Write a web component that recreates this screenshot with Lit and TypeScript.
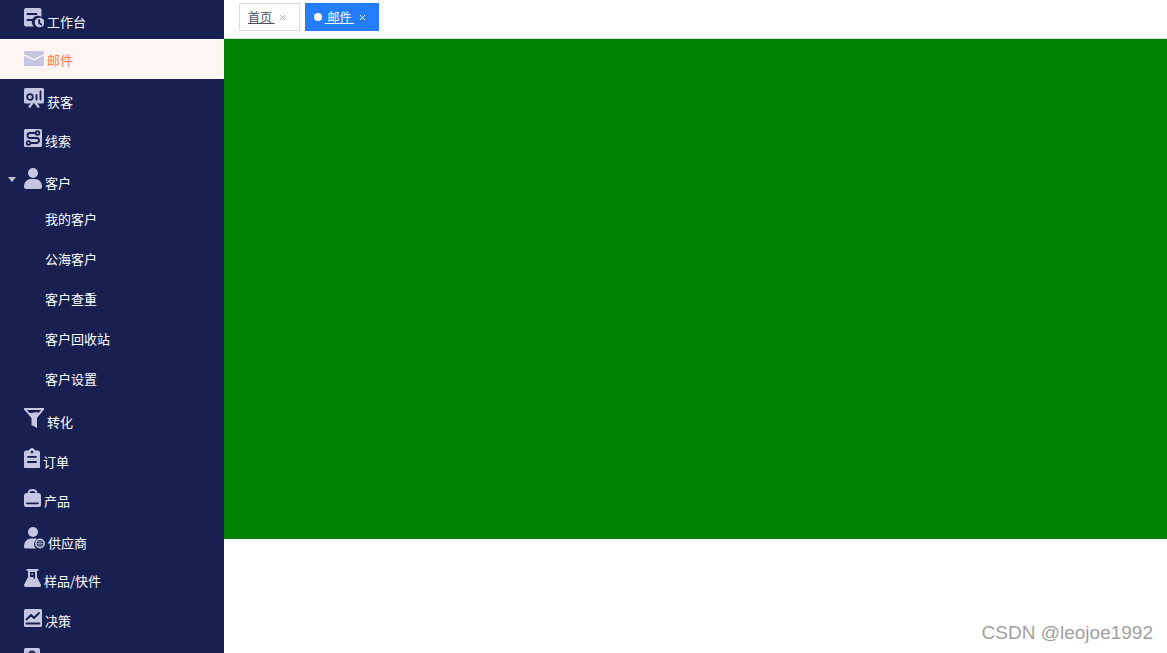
import { LitElement, html, css, svg, nothing } from "lit";
import { customElement, state } from "lit/decorators.js";
import { classMap } from "lit/directives/class-map.js";

interface Icon {
  w: number;
  h: number;
  body: unknown;
}

interface MenuItem {
  key: string;
  label?: string;
  icon: Icon;
  children?: string[];
}

const ICONS: Record<string, Icon> = {
  workbench: {
    w: 20,
    h: 20,
    body: svg`<path fill="currentColor" d="M2 0h13.500a2 2 0 0 1 2 2v7a5.800 5.800 0 0 0-7.500 9.500H2a2 2 0 0 1-2-2V2a2 2 0 0 1 2-2z"/>
      <path class="cut" d="M3.500 6h9M3.500 12h4.500"/>
      <circle cx="15.500" cy="14.500" r="4.800" fill="currentColor"/>
      <path class="cut" d="M15.200 12v3l2 1.500"/>`,
  },
  mail: {
    w: 20,
    h: 15,
    body: svg`<path fill="currentColor" d="M1 0h18a1 1 0 0 1 1 1v2l-10 5L0 3V1a1 1 0 0 1 1-1z"/>
      <path fill="currentColor" d="M0 4.600l10 5 10-5V14a1 1 0 0 1-1 1H1a1 1 0 0 1-1-1z"/>`,
  },
  acquire: {
    w: 20,
    h: 20,
    body: svg`<rect width="20" height="15.500" rx="1.500" fill="currentColor"/>
      <circle class="cut" cx="6" cy="9" r="2.800"/>
      <path class="cut" d="M12.500 7v4.500M16.500 3.500v8"/>
      <path d="M8.500 15l-3.500 4.500M11.500 15l3.500 4.500" fill="none" stroke="currentColor" stroke-width="2.200"/>`,
  },
  clue: {
    w: 18,
    h: 18,
    body: svg`<rect width="18" height="18" rx="1.500" fill="currentColor"/>
      <circle class="cut" cx="13.500" cy="4" r="1.800"/>
      <circle class="cut" cx="4.500" cy="14" r="1.800"/>
      <path class="cut" d="M11.500 4H6a2.500 2.500 0 0 0 0 5h6.500a2.500 2.500 0 0 1 0 5H6.500"/>`,
  },
  customer: {
    w: 18,
    h: 21,
    body: svg`<circle cx="9" cy="5" r="5" fill="currentColor"/>
      <path fill="currentColor" d="M0 19c0-5 3-8 7-8h4c4 0 7 3 7 8a2 2 0 0 1-2 2H2a2 2 0 0 1-2-2z"/>`,
  },
  funnel: {
    w: 20,
    h: 20,
    body: svg`<path fill="currentColor" d="M0 0h20v1.500L13 10v10l-5.500-3v-7L0 1.500z"/>
      <path fill="var(--menu)" d="M3 2h14l-1.500 2c-2 1.200-3.500 0-5.500.4-2 .5-3.500.8-5 .2z"/>`,
  },
  order: {
    w: 16,
    h: 20,
    body: svg`<path fill="currentColor" d="M1.500 2.500H4.500l1.500-1.500a3 3 0 0 1 4 0l1.500 1.500h3L16 4V19a1 1 0 0 1-1 1H1a1 1 0 0 1-1-1V4z"/>
      <circle cx="8" cy="4" r="1.300" fill="var(--menu)"/>
      <path class="cut" d="M4 8.800h8M4 14h8"/>`,
  },
  product: {
    w: 17,
    h: 18,
    body: svg`<path d="M4.500 4.500C4.500 2 6 1 8.500 1s4 1 4 3.500" fill="none" stroke="currentColor" stroke-width="1.800"/>
      <path fill="currentColor" d="M3 4h11a3 3 0 0 1 3 3v9a2 2 0 0 1-2 2H2a2 2 0 0 1-2-2V7a3 3 0 0 1 3-3z"/>
      <path class="cut" d="M3 14.300h11"/>`,
  },
  supplier: {
    w: 21,
    h: 22,
    body: svg`<circle cx="9" cy="5" r="5" fill="currentColor"/>
      <path fill="currentColor" d="M0 20c0-5 3-8.500 7-8.500h4q1.500 0 2.500.6a5.600 5.600 0 0 0-1.500 9.400H1.500A1.500 1.500 0 0 1 0 20z"/>
      <circle cx="16" cy="16.500" r="4.900" fill="currentColor"/>
      <circle cx="16" cy="16.500" r="3" fill="none" stroke="var(--menu)" stroke-width=".8"/>
      <path d="M13 15.500h6M13 17.700h6M15 13.500v6M17 13.500v6" stroke="var(--menu)" stroke-width=".6"/>`,
  },
  sample: {
    w: 17,
    h: 18,
    body: svg`<path fill="currentColor" d="M2.500 0h12v1.800H13V8l3.800 7.500A1.700 1.700 0 0 1 15.300 18H1.700A1.700 1.700 0 0 1 .2 15.500L4 8V1.800H2.500z"/>
      <path fill="var(--menu)" d="M6 3h5v6.500L9.500 10V8H6z"/>
      <path fill="currentColor" d="M7.500 4.500h1.500v1.500H7.500z"/>`,
  },
  decision: {
    w: 18,
    h: 18,
    body: svg`<rect width="18" height="18" rx="1.500" fill="currentColor"/>
      <path class="cut" d="M2.500 10.500L7 6l3 3 5-5M2.500 14.500h13"/>`,
  },
  search: {
    w: 16,
    h: 20,
    body: svg`<rect width="16" height="20" rx="1.500" fill="currentColor"/>
      <circle class="cut" cx="8" cy="7" r="3.500"/>`,
  },
};

const MENU: MenuItem[] = [
  { key: "workbench", label: "工作台", icon: ICONS.workbench },
  { key: "mail", label: "邮件", icon: ICONS.mail },
  { key: "acquire", label: "获客", icon: ICONS.acquire },
  { key: "clue", label: "线索", icon: ICONS.clue },
  {
    key: "customer",
    label: "客户",
    icon: ICONS.customer,
    children: ["我的客户", "公海客户", "客户查重", "客户回收站", "客户设置"],
  },
  { key: "convert", label: "转化", icon: ICONS.funnel },
  { key: "order", label: "订单", icon: ICONS.order },
  { key: "product", label: "产品", icon: ICONS.product },
  { key: "supplier", label: "供应商", icon: ICONS.supplier },
  { key: "sample", label: "样品/快件", icon: ICONS.sample },
  { key: "decision", label: "决策", icon: ICONS.decision },
  { key: "search", icon: ICONS.search },
];

@customElement("side-menu")
export class SideMenu extends LitElement {
  @state() private active = "mail";
  @state() private open = true;

  static styles = css`
    :host {
      --menu: #182052;
      display: block;
      background: var(--menu);
      color: #fff;
      overflow: hidden;
    }
    .list {
      margin: 0;
      padding: 0;
      list-style: none;
    }
    .root {
      margin-top: -1px;
    }
    .row {
      display: flex;
      align-items: center;
      box-sizing: border-box;
      width: 100%;
      height: 40px;
      padding: 0;
      border: 0;
      background: none;
      color: inherit;
      font: inherit;
      text-align: left;
      cursor: pointer;
    }
    .active {
      background: #fff5f2;
      color: #ff7b4f;
    }
    .arrow {
      display: flex;
      justify-content: center;
      width: 24px;
      color: #c0c4cc;
    }
    .content {
      display: block;
      line-height: 17px;
      white-space: nowrap;
    }
    .icon {
      margin: 0 3px -1px 0;
      vertical-align: baseline;
      color: #c5c6e1;
    }
    .cut {
      fill: none;
      stroke: var(--menu);
      stroke-width: 1.8;
      stroke-linecap: round;
      stroke-linejoin: round;
    }
    .child {
      padding: 0 0 2px 45px;
    }
  `;

  private pick(item: MenuItem) {
    if (item.children) this.open = !this.open;
    else this.active = item.key;
  }

  render() {
    return html`<ul class="list root">
      ${MENU.map(
        (item) => html`<li>
          <button
            class=${classMap({ row: true, active: item.key === this.active })}
            aria-label=${item.label ?? item.key}
            @click=${() => this.pick(item)}
          >
            <span class="arrow">
              ${item.children
                ? html`<svg width="8" height="5" viewBox="0 0 8 5">
                    <path d="M0 0h8L4 5z" fill="currentColor" />
                  </svg>`
                : nothing}
            </span>
            <span class="content"
              ><svg
                class="icon"
                width=${item.icon.w}
                height=${item.icon.h}
                viewBox="0 0 ${item.icon.w} ${item.icon.h}"
                aria-hidden="true"
              >
                ${item.icon.body}</svg
              >${item.label ?? nothing}</span
            >
          </button>
          ${item.children && this.open
            ? html`<ul class="list">
                ${item.children.map(
                  (c) => html`<li>
                    <button
                      class=${classMap({ row: true, child: true, active: c === this.active })}
                      @click=${() => (this.active = c)}
                    >
                      ${c}
                    </button>
                  </li>`
                )}
              </ul>`
            : nothing}
        </li>`
      )}
    </ul>`;
  }
}

@customElement("tab-bar")
export class TabBar extends LitElement {
  static styles = css`
    :host {
      display: flex;
      align-items: flex-start;
      gap: 5px;
      box-sizing: border-box;
      height: 39px;
      padding: 3px 15px 0;
      border-bottom: 1px solid #d8dce5;
      background: #fff;
      font-size: 12px;
      line-height: 18px;
    }
    .tab {
      display: flex;
      align-items: center;
      box-sizing: border-box;
      height: 28px;
      padding: 0 8px;
      border: 1px solid #d8dce5;
      color: #495060;
    }
    .current {
      border-color: #247cff;
      background: #247cff;
      color: #fff;
    }
    .dot {
      width: 8px;
      height: 8px;
      margin-right: 3px;
      border-radius: 50%;
      background: #fff;
    }
    .link {
      color: inherit;
      white-space: pre;
      text-decoration: underline;
      text-underline-offset: 1px;
    }
    .close {
      display: flex;
      align-items: center;
      justify-content: center;
      width: 16px;
      height: 16px;
      padding: 0;
      border: 0;
      background: none;
      color: #a0b4c4;
      cursor: pointer;
    }
    .current .close {
      color: #fff;
    }
  `;

  private close() {
    return html`<button class="close" aria-label="关闭">
      <svg width="5" height="5" viewBox="0 0 5 5">
        <path d="M0 0l5 5M5 0L0 5" stroke="currentColor" />
      </svg>
    </button>`;
  }

  render() {
    return html`
      <div class="tab"><a class="link" href="#/home">首页 </a>${this.close()}</div>
      <div class="tab current">
        <span class="dot"></span><a class="link" href="#/mail"> 邮件 </a>${this.close()}
      </div>
    `;
  }
}

@customElement("app-root")
export class AppRoot extends LitElement {
  static styles = css`
    :host {
      display: grid;
      grid-template-columns: 224px 1fr;
      height: 100vh;
      overflow: hidden;
      position: relative;
      background: #fff;
      font-family: "Noto Sans CJK SC", sans-serif;
      font-size: 13px;
    }
    .main {
      min-width: 0;
    }
    .panel {
      height: 500px;
      background: #008000;
    }
    .mark {
      position: absolute;
      right: 14px;
      bottom: 8px;
      color: #a0a0a0;
      font: 19px/24px "Liberation Sans", Arial, sans-serif;
    }
  `;

  render() {
    return html`
      <side-menu></side-menu>
      <main class="main">
        <tab-bar></tab-bar>
        <div class="panel"></div>
      </main>
      <div class="mark">CSDN @leojoe1992</div>
    `;
  }
}
